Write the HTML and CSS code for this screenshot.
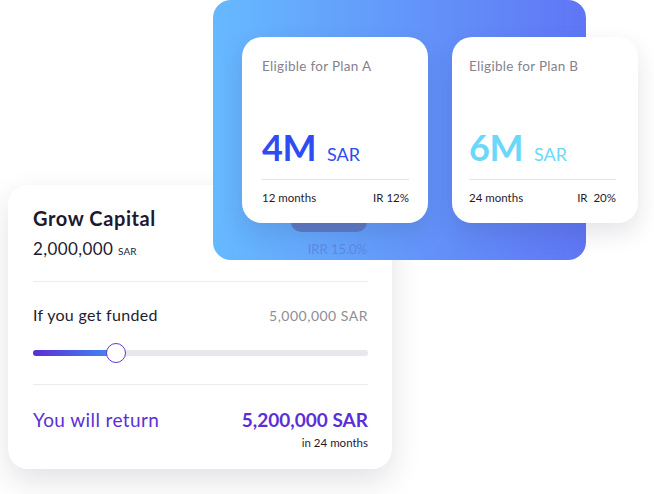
FILE: index.html
```html
<!DOCTYPE html>
<html lang="en">
<head>
  <meta charset="UTF-8">
  <meta name="viewport" content="width=device-width, initial-scale=1.0">
  <title>Grow Capital</title>
  <link rel="stylesheet" href="styles.css">
</head>

<body>

<div class="stage">

  <!-- carte principale -->
  <section class="grow">
    <h2 class="grow-title">Grow Capital</h2>
    <p class="grow-amount">2,000,000 <small>SAR</small></p>

    <hr class="line">

    <div class="row">
      <span class="row-label">If you get funded</span>
      <span class="row-value">5,000,000 SAR</span>
    </div>

    <div class="slider">
      <div class="slider-fill" style="width: 83px;"></div>
      <div class="slider-thumb"></div>
    </div>

    <hr class="line">

    <div class="row ret">
      <span>You will return</span>
      <span class="ret-value">5,200,000 SAR</span>
    </div>
    <p class="ret-note">in 24 months</p>
  </section>

  <!-- panneau bleu avec les plans -->
  <section class="panel">
    <div class="ghost">
      <div class="ghost-pill"></div>
      <span class="ghost-irr">IRR 15.0%</span>
    </div>

    <div class="plans">
      <div class="plan">
        <p class="plan-label">Eligible for Plan A</p>
        <p class="plan-amount a"><b>4M</b> <span>SAR</span></p>
        <div class="plan-foot">
          <span>12 months</span>
          <span>IR 12%</span>
        </div>
      </div>

      <div class="plan plan-b">
        <p class="plan-label">Eligible for Plan B</p>
        <p class="plan-amount b"><b>6M</b> <span>SAR</span></p>
        <div class="plan-foot">
          <span>24 months</span>
          <span>IR&nbsp; 20%</span>
        </div>
      </div>
    </div>
  </section>

</div>

</body>
</html>
```

FILE: styles.css
```css
body {
  font-family: Lato, "Noto Sans", sans-serif;
  background-color: #ffffff;
  margin: 0;
  padding: 0;
  color: #1f1c2e;
}
p, h2 {
  margin: 0;
}

.stage {
  display: grid;
  width: 654px;
  height: 494px;
  overflow: hidden;
}

/* carte Grow Capital */
.grow {
  grid-area: 1 / 1;
  align-self: start;
  justify-self: start;
  margin: 185px 0 0 8px;
  width: 384px;
  height: 284px;
  box-sizing: border-box;
  padding: 21px 24px 0 25px;
  background-color: #fff;
  border-radius: 20px;
  box-shadow: 0 12px 30px rgba(30, 30, 60, 0.13);
  z-index: 1;
}
.grow-title {
  font-size: 20px;
  font-weight: 700;
  letter-spacing: 0.6px;
  line-height: 24px;
  color: #1c1a2d;
}
.grow-amount {
  margin-top: 9px;
  font-size: 17px;
  letter-spacing: 0.4px;
  line-height: 20px;
}
.grow-amount small {
  font-size: 10px;
  letter-spacing: 0;
}
.line {
  border: 0;
  border-top: 1px solid #ececf0;
  margin: 20px 0 0;
}
.row {
  display: flex;
  justify-content: space-between;
  align-items: baseline;
  margin-top: 23px;
  line-height: 20px;
}
.row-label {
  font-size: 16px;
  letter-spacing: 0.3px;
}
.row-value {
  font-size: 14px;
  letter-spacing: 0.5px;
  color: #8e8c98;
}

.slider {
  position: relative;
  height: 22px;
  margin: 16px 0 19px;
}
.slider::before {
  content: "";
  position: absolute;
  left: 0;
  right: 0;
  top: 8px;
  height: 6px;
  border-radius: 3px;
  background-color: #e7e7ec;
}
.slider-fill {
  position: absolute;
  left: 0;
  top: 8px;
  height: 6px;
  border-radius: 3px;
  background: linear-gradient(90deg, #5a2ed6, #3f8cf4);
}
.slider-thumb {
  position: absolute;
  left: 73px;
  top: 1px;
  width: 18px;
  height: 18px;
  border-radius: 50%;
  background-color: #fff;
  border: 1.5px solid #6336dd;
}

.ret {
  margin-top: 23px;
  line-height: 24px;
  font-size: 19px;
  color: #5b2fd8;
}
.ret span:first-child {
  letter-spacing: 0.4px;
}
.ret-value {
  font-weight: 700;
}
.ret-note {
  margin-top: 4px;
  text-align: right;
  font-size: 11.5px;
  line-height: 14px;
}

/* panneau bleu */
.panel {
  grid-area: 1 / 1;
  align-self: start;
  justify-self: start;
  position: relative;
  margin-left: 213px;
  width: 373px;
  height: 260px;
  border-radius: 18px;
  background: linear-gradient(90deg, #66b9ff, #6076f5);
  z-index: 2;
}
.ghost {
  position: absolute;
  left: 78px;
  top: 200px;
  width: 76px;
}
.ghost-pill {
  height: 32px;
  border-radius: 10px;
  background-color: #5d7bc6;
}
.ghost-irr {
  display: block;
  margin-top: 9px;
  text-align: right;
  font-size: 13px;
  color: #5c8ae4;
}

.plans {
  position: relative;
  display: flex;
  gap: 24px;
  padding: 37px 0 0 29px;
}
.plan {
  flex: none;
  display: flex;
  flex-direction: column;
  width: 186px;
  height: 186px;
  box-sizing: border-box;
  padding: 21px 19px 18px 20px;
  background-color: #fff;
  border-radius: 20px;
  box-shadow: 0 10px 24px rgba(30, 30, 60, 0.12);
}
.plan-b {
  padding-left: 17px;
  padding-right: 22px;
}
.plan-label {
  font-size: 13.5px;
  letter-spacing: 0.3px;
  line-height: 16px;
  color: #85828f;
}
.plan-amount {
  margin-top: auto;
  padding-bottom: 14px;
  border-bottom: 1px solid #e3e3e8;
  line-height: 1;
}
.plan-amount b {
  font-size: 36px;
  font-weight: 700;
  letter-spacing: -0.5px;
}
.plan-amount span {
  margin-left: 7px;
  font-size: 18px;
}
.plan-amount.a {
  color: #2e4cf1;
}
.plan-amount.b {
  color: #6bd8fa;
}
.plan-foot {
  display: flex;
  justify-content: space-between;
  margin-top: 11px;
  font-size: 11.5px;
  line-height: 14px;
  color: #1f1c2e;
}
```
